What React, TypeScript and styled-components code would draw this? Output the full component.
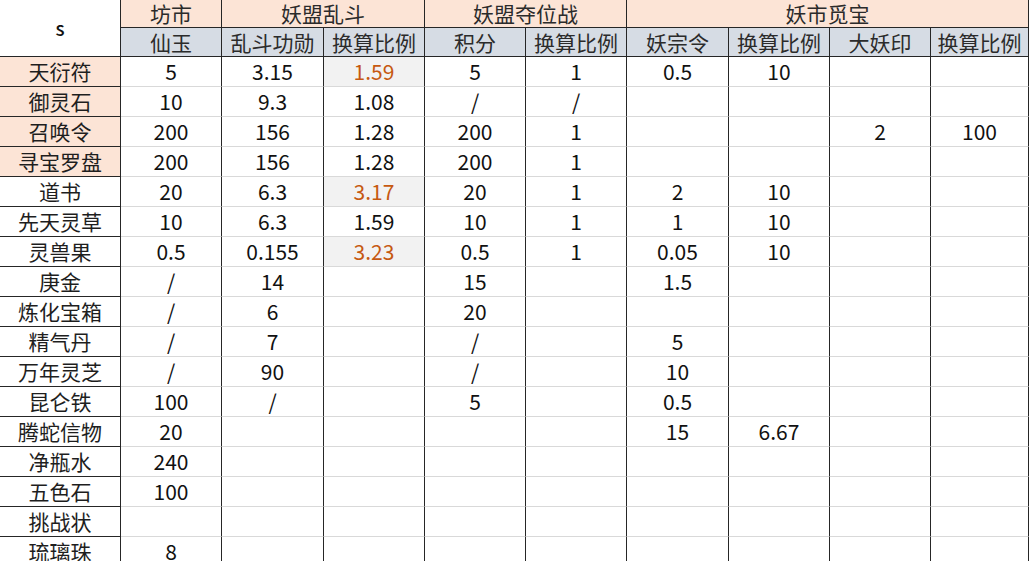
import React from "react";
import styled, { createGlobalStyle } from "styled-components";

const Global = createGlobalStyle`
  html, body { margin: 0; padding: 0; background: #ffffff; overflow: hidden; }
  body { font-family: "Noto Sans CJK SC", "Noto Sans", sans-serif; }
`;

const DARK = "#262626";
const LIGHT = "#d9d9d9";

const Sheet = styled.div`
  display: grid;
  grid-template-columns: 121px 101px 102px 101px 101px 101px 102px 101px 101px 98px;
  grid-template-rows: 28px 29px repeat(17, 30px);
  width: 1029px;
  font-size: 21px;
  color: #111111;
`;

const BaseCell = styled.div`
  box-sizing: border-box;
  display: flex;
  align-items: center;
  justify-content: center;
  border-right: 1px solid ${DARK};
  white-space: nowrap;
  line-height: 1;
`;

const Corner = styled(BaseCell)`
  grid-row: span 2;
  background: #ffffff;
  border-bottom: 1px solid ${DARK};
  font-size: 19px;
  font-weight: 500;
  padding-bottom: 2px;
`;

const GroupHeader = styled(BaseCell)<{ $span: number }>`
  grid-column: span ${(p) => p.$span};
  background: #fce4d6;
  border-bottom: 1px solid ${DARK};
  color: #2b2b2b;
`;

const SubHeader = styled(BaseCell)`
  background: #d6dce4;
  border-bottom: 1px solid ${DARK};
  color: #2b2b2b;
`;

const NameCell = styled(BaseCell)<{ $peach: boolean }>`
  background: ${(p) => (p.$peach ? "#fce4d6" : "#ffffff")};
  border-bottom: 1px solid ${DARK};
  color: #1e1e1e;
`;

const ValueCell = styled(BaseCell)<{ $hl: boolean }>`
  background: ${(p) => (p.$hl ? "#f2f2f2" : "#ffffff")};
  border-bottom: 1px solid ${LIGHT};
  color: ${(p) => (p.$hl ? "#c65911" : "#111111")};
`;

const groups: [string, number][] = [
  ["坊市", 1],
  ["妖盟乱斗", 2],
  ["妖盟夺位战", 2],
  ["妖市觅宝", 4],
];

const subs = ["仙玉", "乱斗功勋", "换算比例", "积分", "换算比例", "妖宗令", "换算比例", "大妖印", "换算比例"];

type Row = { name: string; peach?: boolean; values: string[]; hl?: number[] };

const rows: Row[] = [
  { name: "天衍符", peach: true, values: ["5", "3.15", "1.59", "5", "1", "0.5", "10", "", ""], hl: [2] },
  { name: "御灵石", peach: true, values: ["10", "9.3", "1.08", "/", "/", "", "", "", ""] },
  { name: "召唤令", peach: true, values: ["200", "156", "1.28", "200", "1", "", "", "2", "100"] },
  { name: "寻宝罗盘", peach: true, values: ["200", "156", "1.28", "200", "1", "", "", "", ""] },
  { name: "道书", values: ["20", "6.3", "3.17", "20", "1", "2", "10", "", ""], hl: [2] },
  { name: "先天灵草", values: ["10", "6.3", "1.59", "10", "1", "1", "10", "", ""] },
  { name: "灵兽果", values: ["0.5", "0.155", "3.23", "0.5", "1", "0.05", "10", "", ""], hl: [2] },
  { name: "庚金", values: ["/", "14", "", "15", "", "1.5", "", "", ""] },
  { name: "炼化宝箱", values: ["/", "6", "", "20", "", "", "", "", ""] },
  { name: "精气丹", values: ["/", "7", "", "/", "", "5", "", "", ""] },
  { name: "万年灵芝", values: ["/", "90", "", "/", "", "10", "", "", ""] },
  { name: "昆仑铁", values: ["100", "/", "", "5", "", "0.5", "", "", ""] },
  { name: "腾蛇信物", values: ["20", "", "", "", "", "15", "6.67", "", ""] },
  { name: "净瓶水", values: ["240", "", "", "", "", "", "", "", ""] },
  { name: "五色石", values: ["100", "", "", "", "", "", "", "", ""] },
  { name: "挑战状", values: ["", "", "", "", "", "", "", "", ""] },
  { name: "琉璃珠", values: ["8", "", "", "", "", "", "", "", ""] },
];

export default function App() {
  return (
    <>
      <Global />
      <Sheet>
        <Corner>s</Corner>
        {groups.map(([label, span]) => (
          <GroupHeader key={label} $span={span}>
            {label}
          </GroupHeader>
        ))}
        {subs.map((s, i) => (
          <SubHeader key={i}>{s}</SubHeader>
        ))}
        {rows.map((r) => (
          <React.Fragment key={r.name}>
            <NameCell $peach={!!r.peach}>{r.name}</NameCell>
            {r.values.map((v, i) => (
              <ValueCell key={i} $hl={!!r.hl?.includes(i)}>
                {v}
              </ValueCell>
            ))}
          </React.Fragment>
        ))}
      </Sheet>
    </>
  );
}
